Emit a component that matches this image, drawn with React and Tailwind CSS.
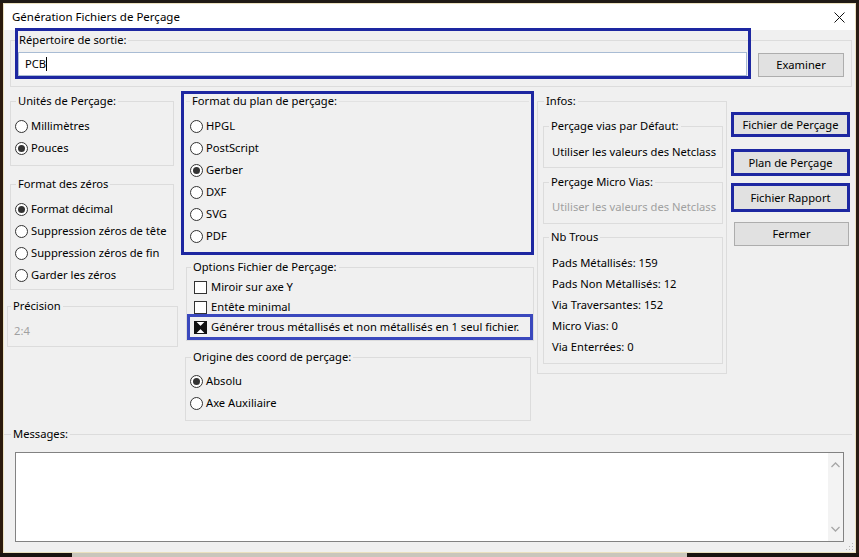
import React from 'react';

const font = "font-['Noto_Sans',sans-serif] text-[11.2px] leading-[16px] text-black";

// Windows-style group box: the legend sits at the border edge, the padding goes on the inner div
function Box({ label, className = '', legendClass = 'ml-[5px]', pad = '', children }) {
  return (
    <fieldset className={`border border-[#dcdcdc] ${className}`}>
      <legend className={`px-[2px] leading-[16px] ${legendClass}`}>{label}</legend>
      <div className={pad}>{children}</div>
    </fieldset>
  );
}

function Radio({ label, checked }) {
  return (
    <div className="flex items-center h-[22px]">
      <span className="w-[13px] h-[13px] shrink-0 rounded-full border border-[#333333] bg-white flex items-center justify-center">
        {checked && <span className="w-[7px] h-[7px] rounded-full bg-[#333333]" />}
      </span>
      <span className="ml-[3px] whitespace-nowrap">{label}</span>
    </div>
  );
}

function Check({ label, checked }) {
  return (
    <div className="flex items-center">
      {checked ? (
        <svg width="13" height="13" viewBox="0 0 13 13" className="shrink-0">
          <rect x="0.5" y="0.5" width="12" height="12" fill="white" stroke="#111" />
          <polygon points="0,0 6.5,6.5 0,13" fill="#111" />
          <polygon points="13,0 6.5,6.5 13,13" fill="#111" />
          <path d="M1 1 L12 12 M12 1 L1 12" stroke="#111" strokeWidth="2.4" />
        </svg>
      ) : (
        <span className="w-[13px] h-[13px] shrink-0 border border-[#333333] bg-white" />
      )}
      <span className="ml-[4px] whitespace-nowrap">{label}</span>
    </div>
  );
}

function Chevron({ up }) {
  return (
    <svg width="9" height="6" viewBox="0 0 9 6">
      <path d={up ? 'M0.5 5 L4.5 1 L8.5 5' : 'M0.5 1 L4.5 5 L8.5 1'} fill="none" stroke="#a6a6a6" strokeWidth="1.3" />
    </svg>
  );
}

export default function App() {
  const trous = [
    'Pads Métallisés: 159',
    'Pads Non Métallisés: 12',
    'Via Traversantes: 152',
    'Micro Vias: 0',
    'Via Enterrées: 0',
  ];

  return (
    <div className={`w-[859px] h-[557px] overflow-hidden bg-[#17120f] flex flex-col ${font}`}>
      <div className="h-[3px] bg-[#201a15]" />
      <div className="flex h-[550px]">
        <div className="w-[3px] bg-[#2b1a0c]" />
        <div className="w-[853px] h-[550px] border border-[#ebe1bf] flex flex-col bg-[#f0f0f0]">
          {/* title bar */}
          <div className="h-[27px] bg-white flex items-center justify-between pl-[8px] pr-[10px]">
            <span className="text-[11.5px]">Génération Fichiers de Perçage</span>
            <svg width="11" height="11" viewBox="0 0 11 11">
              <path d="M0.5 0.5 L10.5 10.5 M10.5 0.5 L0.5 10.5" stroke="#111" strokeWidth="1" />
            </svg>
          </div>

          {/* Répertoire de sortie */}
          <div className="relative mt-[2px] ml-[6px] w-[842px]">
            <Box label="Répertoire de sortie:" legendClass="ml-[6px]" pad="pl-[7px] pr-[7px] pt-[4px] pb-[9px]">
              <div className="flex items-start">
                <div className="w-[729px] h-[24px] bg-white border border-[#a9bcd4] flex items-center px-[6px]">
                  <span>PCB</span>
                  <span className="w-px h-[14px] bg-black" />
                </div>
                <button className="ml-[11px] mt-[1px] w-[86px] h-[24px] bg-[#e1e1e1] border border-[#adadad]">Examiner</button>
              </div>
            </Box>
            <div className="pointer-events-none absolute left-[5px] top-[-4px] w-[736px] h-[51px] border-[3px] border-[#1d27a1]" />
          </div>

          {/* main row */}
          <div className="flex items-start">
            {/* left column */}
            <div className="w-[174px] flex flex-col">
              <Box label="Unités de Perçage:" className="mt-[6px] ml-[6px] w-[164px]" pad="pl-[4px] pt-[6px] pb-[6px]">
                <Radio label="Millimètres" />
                <Radio label="Pouces" checked />
              </Box>
              <Box label="Format des zéros" className="mt-[10px] ml-[6px] w-[164px]" pad="pl-[4px] pt-[6px] pb-[3px]">
                <Radio label="Format décimal" checked />
                <Radio label="Suppression zéros de tête" />
                <Radio label="Suppression zéros de fin" />
                <Radio label="Garder les zéros" />
              </Box>
              <Box label="Précision" legendClass="ml-[3px]" className="mt-[8px] ml-[3px] w-[171px]" pad="pl-[6px] pt-[9px] pb-[7px]">
                <div className="text-[#a0a0a0]">2:4</div>
              </Box>
            </div>

            {/* middle column */}
            <div className="ml-[3px] w-[353px] flex flex-col">
              <div className="mt-[4px] h-[164px] border-[3px] border-[#1d27a1]">
                <fieldset className="-mt-[1px] mx-[2px] border-t border-[#e2e2e2]">
                  <legend className="ml-[4px] px-[2px] leading-[16px]">Format du plan de perçage:</legend>
                  <div className="pl-[4px] pt-[6px]">
                    <Radio label="HPGL" />
                    <Radio label="PostScript" />
                    <Radio label="Gerber" checked />
                    <Radio label="DXF" />
                    <Radio label="SVG" />
                    <Radio label="PDF" />
                  </div>
                </fieldset>
              </div>
              <Box label="Options Fichier de Perçage:" legendClass="ml-[4px]" className="mt-[4px] ml-[5px] w-[345px]" pad="pt-[2px]">
                <div className="h-[20px] pl-[7px] flex items-center">
                  <Check label="Miroir sur axe Y" />
                </div>
                <div className="h-[20px] pl-[7px] flex items-center">
                  <Check label="Entête minimal" />
                </div>
                <div className="-mt-[3px] w-[346px] h-[26px] border-[3px] border-[#3a48bd] pl-[4px] flex items-center">
                  <Check label="Générer trous métallisés et non métallisés en 1 seul fichier." checked />
                </div>
              </Box>
              <Box label="Origine des coord de perçage:" className="mt-[8px] ml-[4px] w-[346px]" pad="pl-[4px] pt-[5px] pb-[6px]">
                <Radio label="Absolu" checked />
                <Radio label="Axe Auxiliaire" />
              </Box>
            </div>

            {/* infos column */}
            <Box label="Infos:" legendClass="ml-[6px]" className="mt-[6px] ml-[3px] w-[190px]" pad="pl-[5px] pb-[9px]">
              <Box label="Perçage vias par Défaut:" className="mt-[9px] w-[180px]" pad="pl-[8px] pt-[10px] pb-[7px]">
                <div className="whitespace-nowrap">Utiliser les valeurs des Netclass</div>
              </Box>
              <Box label="Perçage Micro Vias:" className="mt-[6px] w-[180px]" pad="pl-[8px] pt-[9px] pb-[8px]">
                <div className="whitespace-nowrap text-[#a0a0a0]">Utiliser les valeurs des Netclass</div>
              </Box>
              <Box label="Nb Trous" className="mt-[5px] w-[180px]" pad="pl-[8px] pt-[7px] pb-[6px]">
                {trous.map((t) => (
                  <div key={t} className="h-[21px] flex items-center whitespace-nowrap">{t}</div>
                ))}
              </Box>
            </Box>

            {/* buttons column */}
            <div className="ml-[4px] w-[119px] flex flex-col">
              <button className="mt-[25px] h-[25px] border-[3px] border-[#1d27a1] bg-[#e1e1e1]">Fichier de Perçage</button>
              <button className="mt-[12px] h-[27px] border-[3px] border-[#1d27a1] bg-[#e1e1e1]">Plan de Perçage</button>
              <button className="mt-[7px] h-[29px] border-[3px] border-[#1d27a1] bg-[#e1e1e1]">Fichier Rapport</button>
              <button className="mt-[10px] ml-[3px] w-[115px] h-[24px] border border-[#adadad] bg-[#e1e1e1]">Fermer</button>
            </div>
          </div>

          {/* messages */}
          <fieldset className="mt-[5px] w-[848px] border-t border-[#dcdcdc]">
            <legend className="ml-[7px] px-[2px] leading-[16px]">Messages:</legend>
            <div className="pl-[11px] pt-[10px]">
              <div className="w-[829px] h-[90px] bg-white border border-[#828282] flex justify-end">
                <div className="w-[15px] h-full bg-[#f3f3f3] flex flex-col items-center justify-between py-[9px]">
                  <Chevron up />
                  <Chevron />
                </div>
              </div>
            </div>
          </fieldset>

          <div className="flex-1 flex justify-end items-end pr-[1px] pb-[1px]">
            <svg width="9" height="9" viewBox="0 0 9 9">
              <rect x="7" y="1" width="1" height="1" fill="#b5b5b5" />
              <rect x="4" y="4" width="1" height="1" fill="#b5b5b5" />
              <rect x="7" y="4" width="1" height="1" fill="#b5b5b5" />
              <rect x="1" y="7" width="1" height="1" fill="#b5b5b5" />
              <rect x="4" y="7" width="1" height="1" fill="#b5b5b5" />
              <rect x="7" y="7" width="1" height="1" fill="#b5b5b5" />
            </svg>
          </div>
        </div>
        <div className="flex-1 bg-[#2a1c14]" />
      </div>
      <div className="flex-1 flex">
        <div className="w-[72px] bg-[#1a1410]" />
        <div className="w-[615px] bg-[#c9c6bc]" />
        <div className="flex-1 bg-[#1a1410]" />
      </div>
    </div>
  );
}
